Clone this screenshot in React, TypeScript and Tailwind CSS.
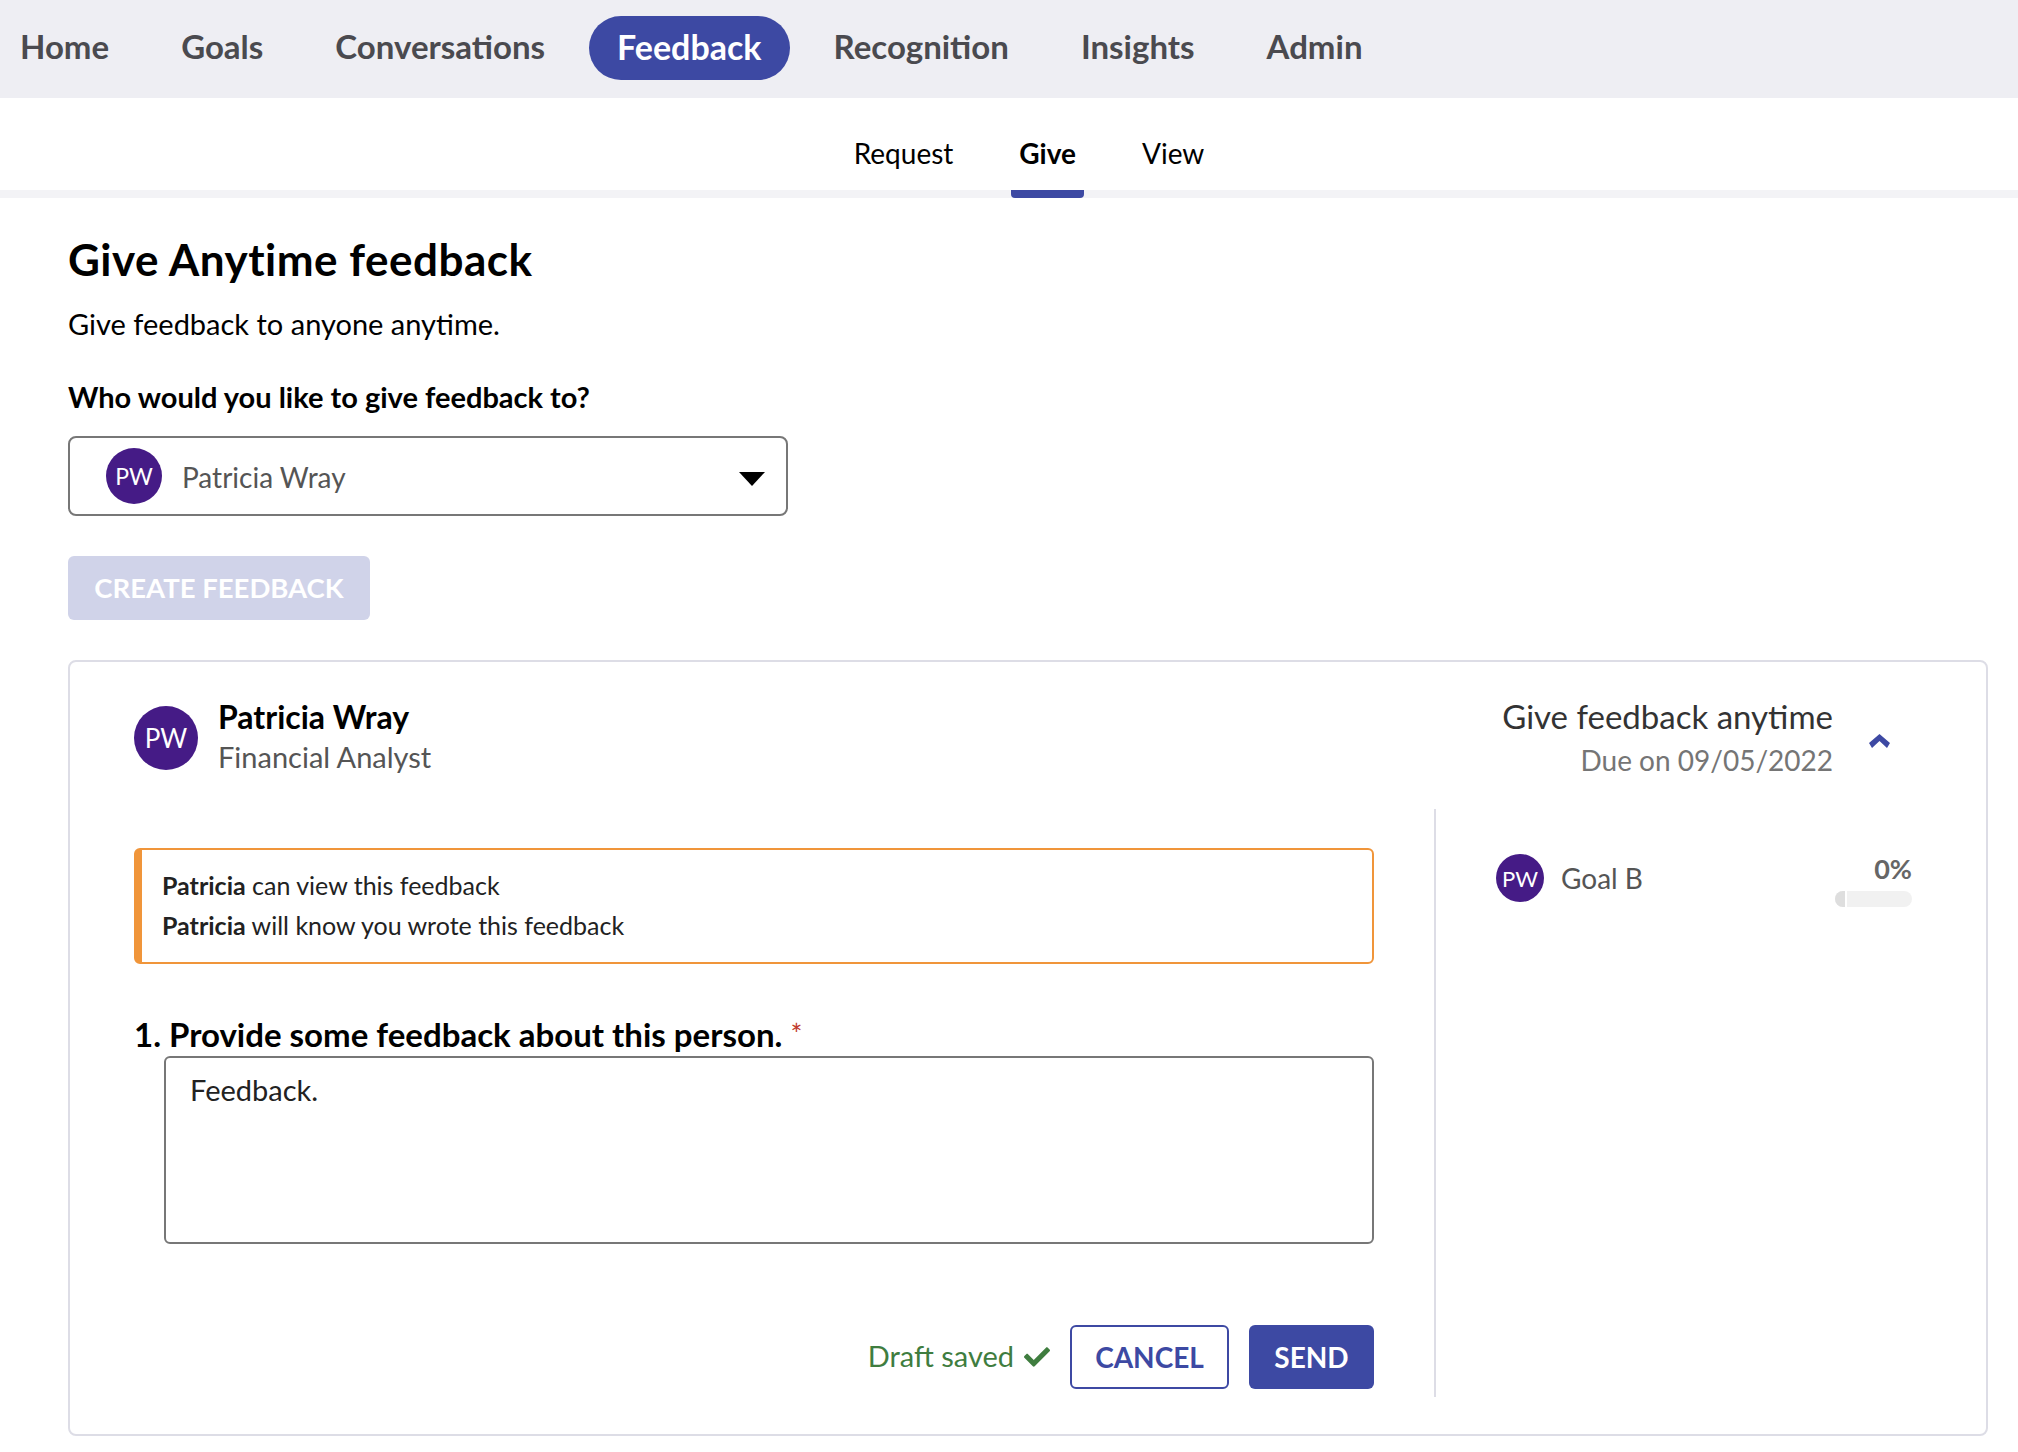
import React from 'react';
import { FaCheck } from 'react-icons/fa';

const navItems = ['Home', 'Goals', 'Conversations', 'Feedback', 'Recognition', 'Insights', 'Admin'];

const Avatar = ({ size }: { size: string }) => (
  <div className={`${size} flex shrink-0 items-center justify-center rounded-full bg-[#451b86] text-white`}>PW</div>
);

export default function App() {
  return (
    <div className="min-h-[1452px] bg-white font-['Lato',sans-serif] text-black">
      <nav className="-ml-[8px] flex h-[98px] items-center gap-[16px] bg-[#eeeef3]">
        {navItems.map((item) =>
          item === 'Feedback' ? (
            <a key={item} className="mb-[2px] flex h-[64px] items-center rounded-[32px] bg-[#3d49a3] px-[28px] pb-[4px] text-[34px] font-bold text-white">
              {item}
            </a>
          ) : (
            <a key={item} className="px-[28px] pb-[5px] text-[33px] font-bold text-[#4a4a4f]">
              {item}
            </a>
          ),
        )}
      </nav>

      <div className="flex h-[100px] justify-center gap-[50px] border-b-[8px] border-[#f3f3f6] pl-[40px] text-[28px]">
        <a className="flex items-center px-[8px] pt-[17px]">Request</a>
        <a className="-mb-[8px] flex items-center rounded-b-[4px] border-b-[8px] border-[#3d49a3] px-[8px] pt-[17px] font-bold">Give</a>
        <a className="flex items-center px-[8px] pt-[17px]">View</a>
      </div>

      <main className="px-[68px] pr-[30px]">
        <h1 className="mt-[33px] text-[44px] leading-[56px] font-bold tracking-[0.5px]">Give Anytime feedback</h1>
        <p className="mt-[17px] text-[29px] leading-[40px]">Give feedback to anyone anytime.</p>
        <p className="mt-[33px] text-[29px] leading-[40px] font-bold">Who would you like to give feedback to?</p>

        <div className="mt-[19px] flex h-[80px] w-[720px] items-center rounded-[8px] border-2 border-[#777] pr-[21px] pl-[36px]">
          <Avatar size="h-[56px] w-[56px] text-[23px]" />
          <span className="ml-[20px] flex-1 pt-[2px] text-[28px] text-[#555]">Patricia Wray</span>
          <svg className="mt-[6px]" width="26" height="14" viewBox="0 0 26 14">
            <path d="M0 0H26L13 14Z" fill="#000" />
          </svg>
        </div>

        <button className="mt-[40px] flex h-[64px] w-[302px] items-center justify-center rounded-[6px] bg-[#d0d3e9] text-[27.5px] font-bold text-white">
          CREATE FEEDBACK
        </button>

        <section className="mt-[40px] h-[776px] rounded-[8px] border-2 border-[#dddde6] pt-[33px] pr-[54px] pl-[64px]">
          <div className="flex h-[114px] items-start justify-between">
            <div className="flex items-center gap-[20px]">
              <Avatar size="mt-[6px] h-[64px] w-[64px] text-[26px]" />
              <div>
                <div className="text-[32px] leading-[44px] font-bold">Patricia Wray</div>
                <div className="text-[29px] leading-[36px] text-[#555]">Financial Analyst</div>
              </div>
            </div>
            <div className="flex items-center gap-[34px]">
              <div className="-mt-[1px] text-right">
                <div className="text-[33px] leading-[44px] text-[#333]">Give feedback anytime</div>
                <div className="mt-[4px] text-[28px] leading-[36px] text-[#757575]">Due on 09/05/2022</div>
              </div>
              <svg className="mt-[8px] ml-[2px]" width="21" height="14" viewBox="0 0 21 14">
                <path d="M10.5 0L21 9L18 14L10.5 7L3 14L0 9Z" fill="#3d49a3" />
              </svg>
              <div className="w-[8px]" />
            </div>
          </div>

          <div className="flex">
            <div className="w-[1240px] pt-[39px]">
              <div className="flex h-[116px] flex-col justify-center gap-[12px] rounded-[6px] border-2 border-l-[8px] border-[#f0953a] pb-[3px] pl-[20px] text-[25px] leading-[28px] text-[#222]">
                <p><b>Patricia</b> can view this feedback</p>
                <p><b>Patricia</b> will know you wrote this feedback</p>
              </div>
              <div className="mt-[50px] flex text-[33px] leading-[40px] font-bold">
                1. Provide some feedback about this person.
                <span className="ml-[8px] text-[28px] font-normal text-[#c0392b]">*</span>
              </div>
              <div className="mt-[2px] ml-[30px] h-[188px] rounded-[6px] border-2 border-[#777] px-[24px] pt-[12px] text-[29px] leading-[40px] text-[#222]">
                Feedback.
              </div>
              <div className="mt-[81px] flex items-center justify-end">
                <span className="pb-[3px] text-[29px] text-[#3f7d3f]">Draft saved</span>
                <FaCheck className="ml-[10px] h-[26px] w-[26px] text-[#3f7d3f]" />
                <button className="ml-[20px] h-[64px] w-[159px] rounded-[6px] border-2 border-[#3d49a3] text-[28px] font-bold text-[#3d49a3]">CANCEL</button>
                <button className="ml-[20px] h-[64px] w-[125px] rounded-[6px] bg-[#3d49a3] text-[28px] font-bold text-white">SEND</button>
              </div>
            </div>
            <div className="ml-[60px] h-[588px] w-[2px] bg-[#dddde6]" />
            <div className="ml-[60px] flex h-[138px] w-[416px] items-center">
              <Avatar size="h-[48px] w-[48px] text-[22px]" />
              <span className="ml-[17px] flex-1 text-[28px] text-[#555]">Goal B</span>
              <div className="mt-[3px] flex w-[77px] flex-col items-end">
                <span className="text-[27px] leading-[32px] font-bold text-[#666]">0%</span>
                <div className="mt-[6px] h-[16px] w-[77px] overflow-hidden rounded-[8px] bg-[#f1f1f1]">
                  <div className="h-full w-[12px] border-r-2 border-white bg-[#dedede]" />
                </div>
              </div>
            </div>
          </div>
        </section>
      </main>
    </div>
  );
}
